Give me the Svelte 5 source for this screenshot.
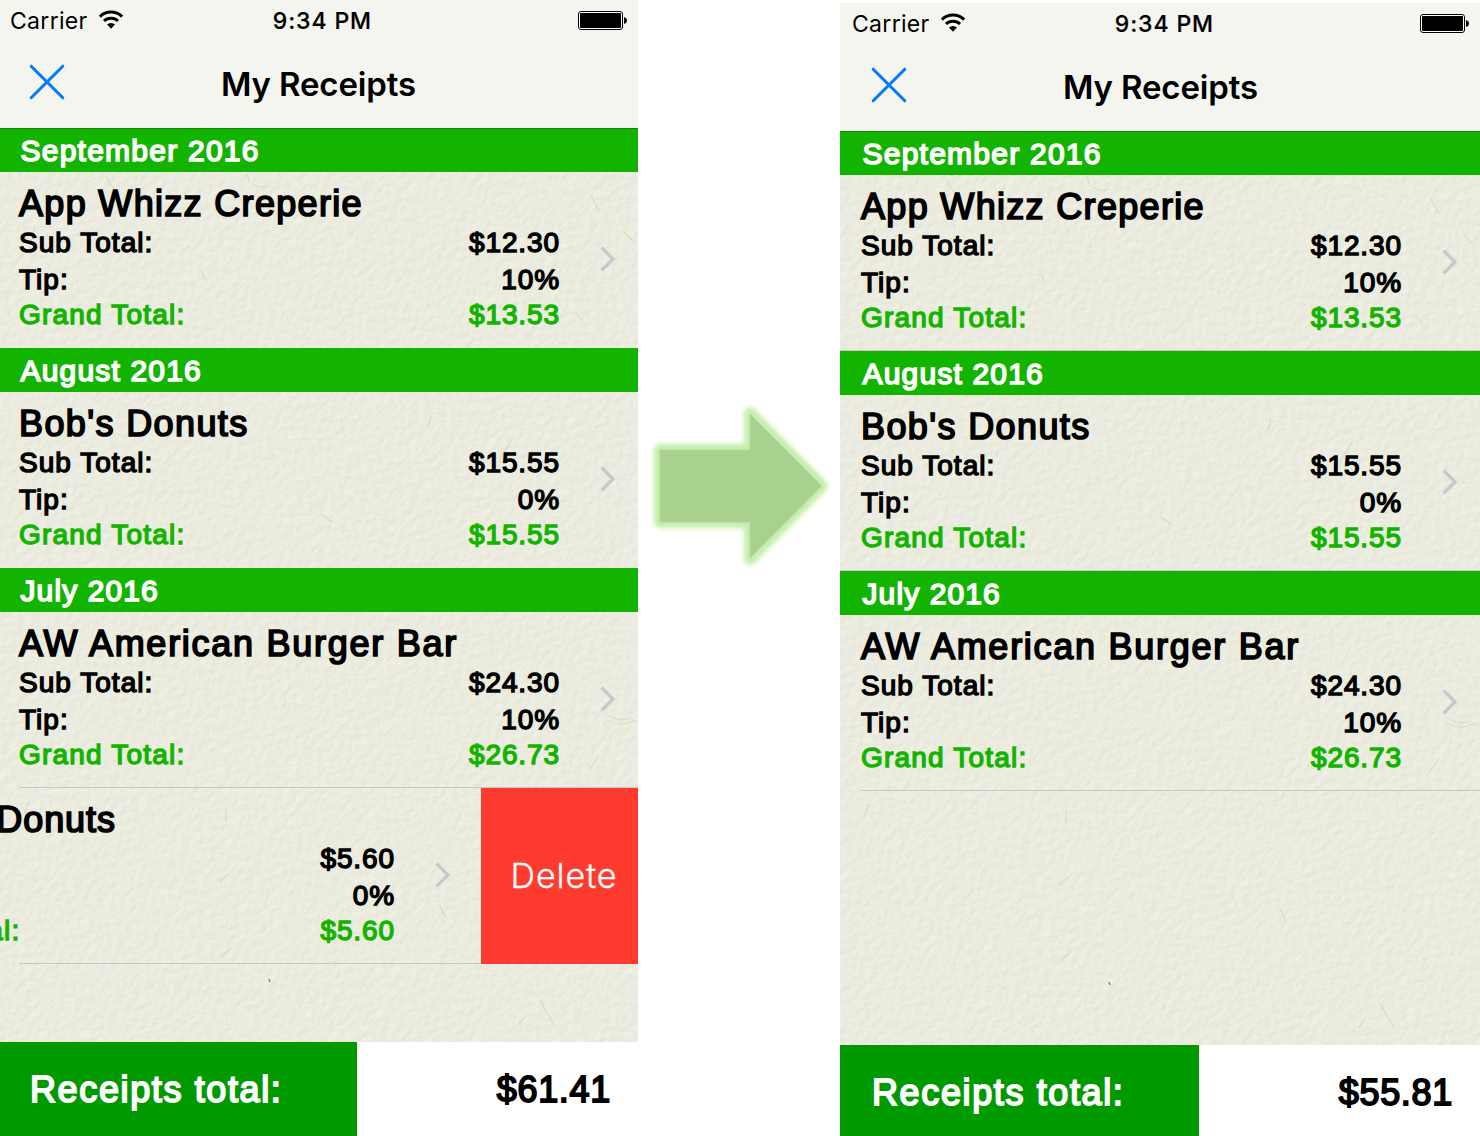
<script>
  const base = [
    {
      month: 'September 2016', spacing: 1.24,
      rows: [{ name: 'App Whizz Creperie', spacing: 1.32, sub: '$12.30', tip: '10%', grand: '$13.53' }]
    },
    {
      month: 'August 2016', spacing: 1.18,
      rows: [{ name: "Bob's Donuts", spacing: 1.38, sub: '$15.55', tip: '0%', grand: '$15.55' }]
    },
    {
      month: 'July 2016', spacing: 1.1,
      rows: [{ name: 'AW American Burger Bar', spacing: 1.74, sub: '$24.30', tip: '10%', grand: '$26.73' }]
    }
  ];

  const swiped = { name: 'Dunkin Donuts', spacing: 0.95, sub: '$5.60', tip: '0%', grand: '$5.60', swiped: true };

  const phones = [
    {
      id: 'before',
      total: '$61.41',
      sections: base.map((s, i) => (i === 2 ? { ...s, rows: [...s.rows, swiped] } : s))
    },
    { id: 'after', total: '$55.81', sections: base }
  ];
</script>

{#snippet phone(p)}
  <section class="phone {p.id}">
    <svg class="paper" aria-hidden="true">
      <filter id="grain-{p.id}" x="0" y="0" width="100%" height="100%" color-interpolation-filters="sRGB">
        <feTurbulence type="fractalNoise" baseFrequency="0.14" numOctaves="3" seed="8" result="n" />
        <feDiffuseLighting in="n" surfaceScale="0.55" diffuseConstant="1.18" lighting-color="#edeee0">
          <feDistantLight azimuth="225" elevation="58" />
        </feDiffuseLighting>
      </filter>
      <rect class="grain" width="100%" height="100%" filter="url(#grain-{p.id})" />
      <g class="fibres">
        <path d="M252 184q10 5 18 2M247 174l2 7M201 271l5 9M591 196l8 15M625 233l8 8M577 314l5 6M106 177l8 12M35 226l-2 9" />
        <path d="M321 514l11 8M512 440l-12 18M431 415l-3 12M226 808v13M29 802l-5 12M228 874l-8 8M440 906l6 12M231 948l-10 10M540 1000l14 25M524 1018l-5 6" />
        <path d="M607 720q14 8 28 0M599 756l-10 14M609 716q12 6 22 2" />
      </g>
      <path class="speck" d="M269 979l1 3" />
    </svg>

    <header class="nav">
      <div class="status">
        <span class="carrier">Carrier</span>
        <svg class="wifi" viewBox="0 0 26 20" width="26" height="20" aria-hidden="true">
          <path d="M1.9 6.6a15.8 15.8 0 0 1 22.2 0" />
          <path d="M6 11a10 10 0 0 1 14 0" />
          <path class="dot" d="M13 18.8l-4-4.2a5.9 5.9 0 0 1 8 0z" />
        </svg>
        <span class="time">9:34 PM</span>
        <svg class="battery" viewBox="0 0 50 20" width="50" height="20" aria-hidden="true">
          <rect class="shell" x="0.5" y="0.5" width="44" height="18" rx="2.5" />
          <rect x="2" y="2" width="41" height="15" rx="1" />
          <path d="M46 6.2h.8q2.2 1 2.2 3.3t-2.2 3.3H46z" />
        </svg>
      </div>
      <div class="bar">
        <svg class="close" viewBox="0 0 36 36" width="36" height="36" aria-hidden="true">
          <path d="M2.2 2.2L33.8 33.8M33.8 2.2L2.2 33.8" />
        </svg>
        <h1>My Receipts</h1>
      </div>
    </header>

    <main class="list">
      {#each p.sections as s}
        <h2><span style:letter-spacing="{s.spacing}px">{s.month}</span></h2>
        {#each s.rows as r}
          <article class="row" class:swiped={r.swiped}>
            <div class="content">
              <h3><span style:letter-spacing="{r.spacing}px">{r.name}</span></h3>
              <div class="line sub"><span>Sub Total:</span><b>{r.sub}</b></div>
              <div class="line tip"><span>Tip:</span><b>{r.tip}</b></div>
              <div class="line grand"><span>Grand Total:</span><b>{r.grand}</b></div>
            </div>
            <svg class="chevron" viewBox="0 0 16 26" width="16" height="26" aria-hidden="true">
              <path d="M1.6 1.6L13 13L1.6 24.4" />
            </svg>
            {#if r.swiped}
              <button class="delete">Delete</button>
            {/if}
          </article>
        {/each}
      {/each}
    </main>

    <footer>
      <div class="label">Receipts total:</div>
      <div class="total">{p.total}</div>
    </footer>
  </section>
{/snippet}

<div class="stage">
  {@render phone(phones[0])}
  <svg class="arrow" viewBox="0 0 202 180" width="202" height="180" aria-hidden="true">
    <filter id="glow" x="-20%" y="-20%" width="140%" height="140%">
      <feGaussianBlur stdDeviation="2" />
    </filter>
    <path class="halo" filter="url(#glow)" d="M22 54H112V17L184 90L112 163V126H22z" />
    <path class="shape" d="M22 54H112V18L183.5 90L112 162V126H22z" />
  </svg>
  {@render phone(phones[1])}
</div>

<style>
  :global(body) {
    margin: 0;
    background: #fff;
  }
  .stage {
    display: flex;
    align-items: flex-start;
    width: 1480px;
    height: 1136px;
    overflow: hidden;
    background: #fff;
    color: #000;
    font-family: 'Liberation Sans', Arial, sans-serif;
  }
  .phone {
    --bleed: 0px;
    position: relative;
    isolation: isolate;
    display: flex;
    flex-direction: column;
    flex: none;
    width: 638px;
    height: 1136px;
    overflow: hidden;
    background: #ebecdf;
  }
  .after {
    --bleed: 2px;
    width: 640px;
    height: 1133px;
    margin-top: 3px;
  }
  .paper {
    position: absolute;
    inset: 0;
    z-index: -1;
    width: 100%;
    height: 100%;
  }
  .grain {
    opacity: 0.28;
  }
  .fibres {
    fill: none;
    stroke: #cfcfbb;
    stroke-width: 1.2;
    stroke-linecap: round;
    opacity: 0.6;
  }
  .speck {
    stroke: #8f8f78;
    stroke-width: 1.6;
  }

  .nav {
    box-sizing: border-box;
    height: 128px;
    background: #f5f5f0;
    font-family: Inter, sans-serif;
  }
  .status {
    box-sizing: border-box;
    display: grid;
    grid-template-columns: auto 1fr auto auto;
    align-items: start;
    height: 40px;
    padding: 7px 10px 0 calc(10px + var(--bleed));
    font-size: 23px;
    line-height: 28px;
  }
  .carrier {
    letter-spacing: 0.3px;
  }
  .wifi {
    margin: 3px 0 0 10px;
    fill: none;
    stroke: #000;
    stroke-width: 3;
  }
  .wifi .dot {
    fill: #000;
    stroke: none;
  }
  .time {
    margin-right: 206px;
    font-weight: 500;
    letter-spacing: 0.9px;
    -webkit-text-stroke: 0.2px #000;
  }
  .battery {
    margin-top: 4px;
  }
  .shell {
    fill: #fff;
    stroke: #000;
  }
  .bar {
    display: grid;
    grid-template-columns: 36px 1fr 36px;
    align-items: start;
    padding: 0 30px 0 calc(29px + var(--bleed));
  }
  .before .bar {
    padding-right: 30px;
  }
  .close {
    margin-top: 24px;
    fill: none;
    stroke: #007aff;
    stroke-width: 3;
    stroke-linecap: round;
  }
  h1 {
    margin: 24px 0 0;
    font-size: 33px;
    font-weight: 600;
    letter-spacing: -0.15px;
    line-height: 40px;
    text-align: center;
  }

  .list {
    flex: 1;
  }
  h2 {
    box-sizing: border-box;
    height: 44px;
    margin: 0;
    padding-left: calc(20.5px + var(--bleed));
    background: #13b400;
    color: #fff;
    font-size: 30px;
    font-weight: 400;
    line-height: 45px;
    -webkit-text-stroke: 1.6px #fff;
  }
  h2:first-child {
    box-shadow: inset 0 1px #12850a;
  }
  .row {
    position: relative;
    box-sizing: border-box;
    display: flex;
    align-items: flex-start;
    height: 176px;
    padding: 11px 22px 0 calc(19px + var(--bleed));
  }
  .row:not(:has(+ h2))::after,
  .after .row::after {
    content: '';
    position: absolute;
    right: 0;
    bottom: 0;
    left: calc(19px + var(--bleed));
    height: 1px;
    background: #c8c7cc;
  }
  .after .row:has(+ h2)::after {
    left: 0;
  }
  .content {
    width: 541px;
    flex: none;
    white-space: nowrap;
  }
  h3 {
    margin: 0;
    font-size: 36px;
    font-weight: 400;
    line-height: 41px;
    -webkit-text-stroke: 1.7px #000;
  }
  .line {
    display: flex;
    justify-content: space-between;
    font-size: 28px;
    letter-spacing: 1.03px;
    -webkit-text-stroke: 1.4px currentColor;
  }
  .line b {
    font-weight: 400;
    letter-spacing: 0.9px;
  }
  .sub {
    line-height: 38px;
  }
  .tip {
    line-height: 36px;
  }
  .grand {
    color: #13b400;
    line-height: 33px;
  }
  .grand span {
    letter-spacing: 1.2px;
  }
  .chevron {
    flex: none;
    margin: 63px 0 0 40px;
    fill: none;
    stroke: #c7c7cc;
    stroke-width: 3.3;
  }
  .swiped {
    padding-right: 0;
  }
  .swiped .content {
    margin-left: -165px;
  }
  .swiped h3 {
    display: flex;
    justify-content: flex-end;
    width: 262px;
  }
  .delete {
    position: relative;
    z-index: 1;
    align-self: stretch;
    flex: none;
    width: 157px;
    margin: -11px 0 0 30px;
    padding: 0 0 0 9px;
    border: 0;
    background: #ff3b30;
    color: #fff;
    font: 300 34px/174px Inter, sans-serif;
    letter-spacing: 0.9px;
    -webkit-text-stroke: 0.3px #fff;
  }

  footer {
    display: flex;
    height: 94px;
    font-size: 36px;
    line-height: 95px;
    background: #fff;
    -webkit-text-stroke: 1.8px currentColor;
  }
  .after footer {
    height: 91px;
  }
  .label {
    box-sizing: border-box;
    width: calc(357px + var(--bleed));
    padding-left: calc(30px + var(--bleed));
    background: #009a00;
    color: #fff;
    letter-spacing: 1.62px;
  }
  .total {
    flex: 1;
    padding-right: 27px;
    text-align: right;
    letter-spacing: 0.7px;
  }
  .arrow {
    flex: none;
    margin-top: 396px;
    overflow: visible;
  }
  .halo {
    fill: #c5efac;
    stroke: #c5efac;
    stroke-width: 12;
    stroke-linejoin: round;
  }
  .shape {
    fill: #a8d18d;
    stroke: #b4d3a2;
    stroke-width: 1;
  }
</style>
